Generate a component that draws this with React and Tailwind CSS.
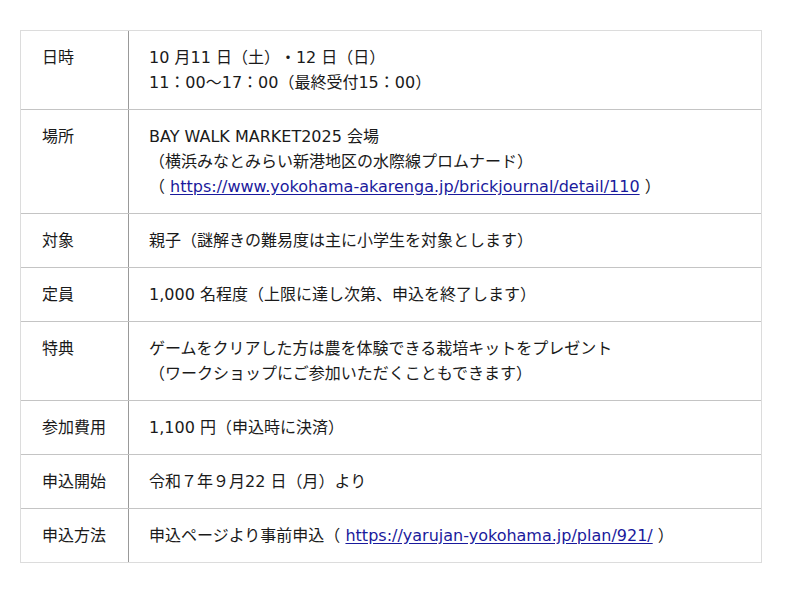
import React from "react";

const linkCls = "text-[#1a1a9c] underline underline-offset-2";

const rows = [
  {
    label: "日時",
    content: (
      <>
        <div>10 月11 日（土）・12 日（日）</div>
        <div>11：00〜17：00（最終受付15：00）</div>
      </>
    ),
  },
  {
    label: "場所",
    content: (
      <>
        <div>BAY WALK MARKET2025 会場</div>
        <div>（横浜みなとみらい新港地区の水際線プロムナード）</div>
        <div>
          （ <a className={linkCls} href="#">https://www.yokohama-akarenga.jp/brickjournal/detail/110</a> ）
        </div>
      </>
    ),
  },
  { label: "対象", content: <div>親子（謎解きの難易度は主に小学生を対象とします）</div> },
  { label: "定員", content: <div>1,000 名程度（上限に達し次第、申込を終了します）</div> },
  {
    label: "特典",
    content: (
      <>
        <div>ゲームをクリアした方は農を体験できる栽培キットをプレゼント</div>
        <div>（ワークショップにご参加いただくこともできます）</div>
      </>
    ),
  },
  { label: "参加費用", content: <div>1,100 円（申込時に決済）</div> },
  { label: "申込開始", content: <div>令和７年９月22 日（月）より</div> },
  {
    label: "申込方法",
    content: (
      <div>
        申込ページより事前申込（ <a className={linkCls} href="#">https://yarujan-yokohama.jp/plan/921/</a> ）
      </div>
    ),
  },
];

export default function App() {
  return (
    <div
      className="w-[800px] h-[593px] bg-white pt-[30px] pl-[20px] text-[16px] leading-[25px] text-[#1a1a1a] [text-spacing-trim:space-all]"
      style={{ fontFamily: '"DejaVu Sans", "Noto Sans CJK JP", sans-serif' }}
    >
      <div className="w-[742px] border border-[#dcdcdc] flex flex-col">
        {rows.map((r, i) => (
          <div key={i} className={"flex " + (i > 0 ? "border-t border-[#c4c4c4]" : "")}>
            <div className="w-[108px] shrink-0 border-r border-[#999] py-[14px] pl-[21px]">{r.label}</div>
            <div className="flex-1 py-[14px] pl-[20px]">{r.content}</div>
          </div>
        ))}
      </div>
    </div>
  );
}
